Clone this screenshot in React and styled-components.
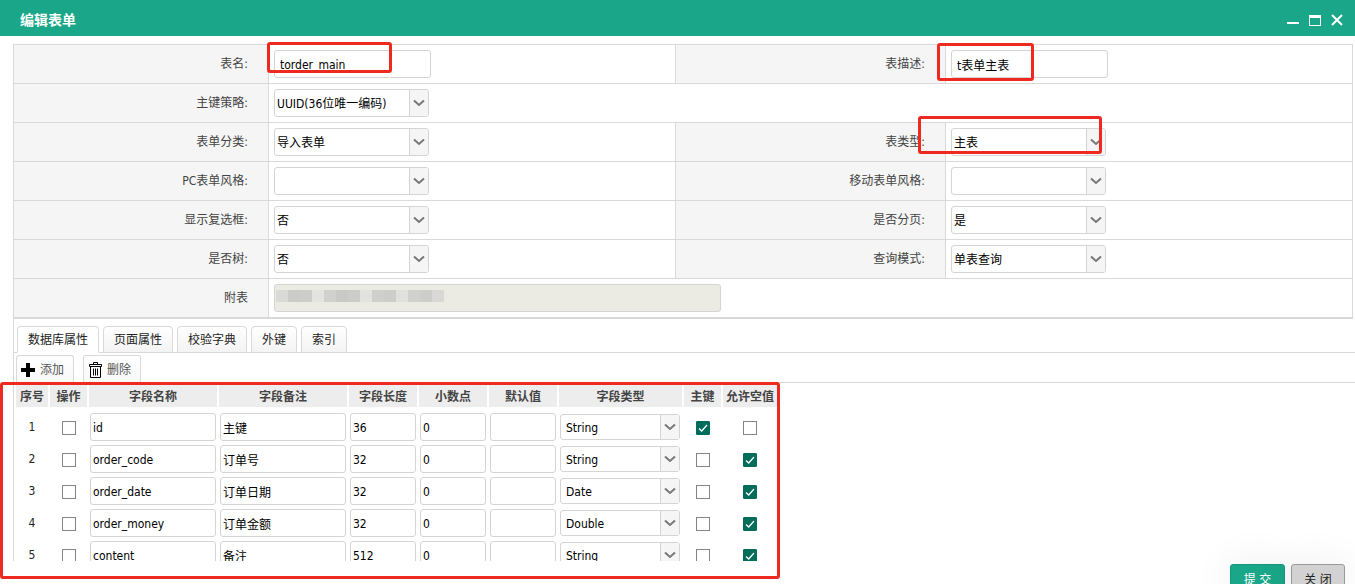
import React, { useState } from 'react';
import styled, { createGlobalStyle } from 'styled-components';

const GlobalStyle = createGlobalStyle`
    *{
        box-sizing: border-box;
    }

    body{
        margin: 0;
        background-color: #fff;
    }

    body, input, select, button{
        font-family: "DejaVu Sans Condensed", "Noto Sans CJK SC", sans-serif;
        font-size: 12px;
        line-height: 16px;
    }
`;

const formRows = [
    [
        { id: 'tableName', label: '表名:', type: 'text', value: 'torder_main', mark: 'name' },
        { id: 'tableDesc', label: '表描述:', type: 'text', value: 't表单主表', mark: 'desc' },
    ],
    [{ id: 'keyPolicy', label: '主键策略:', type: 'select', value: 'UUID(36位唯一编码)' }],
    [
        { id: 'category', label: '表单分类:', type: 'select', value: '导入表单' },
        { id: 'tableType', label: '表类型:', type: 'select', value: '主表', mark: 'type' },
    ],
    [
        { id: 'pcStyle', label: 'PC表单风格:', type: 'select', value: '' },
        { id: 'mobileStyle', label: '移动表单风格:', type: 'select', value: '' },
    ],
    [
        { id: 'showCheck', label: '显示复选框:', type: 'select', value: '否' },
        { id: 'paging', label: '是否分页:', type: 'select', value: '是' },
    ],
    [
        { id: 'isTree', label: '是否树:', type: 'select', value: '否' },
        { id: 'queryMode', label: '查询模式:', type: 'select', value: '单表查询' },
    ],
    [{ id: 'subTable', label: '附表', type: 'masked' }],
];

const tabs = ['数据库属性', '页面属性', '校验字典', '外键', '索引'];

const columns = [
    { title: '序号', width: 32 },
    { title: '操作', width: 37 },
    { title: '字段名称', width: 128 },
    { title: '字段备注', width: 128 },
    { title: '字段长度', width: 68 },
    { title: '小数点', width: 68 },
    { title: '默认值', width: 68 },
    { title: '字段类型', width: 123 },
    { title: '主键', width: 37 },
    { title: '允许空值', width: 54 },
];

const fields = [
    { name: 'id', remark: '主键', length: '36', type: 'String', primary: true, nullable: false },
    { name: 'order_code', remark: '订单号', length: '32', type: 'String', primary: false, nullable: true },
    { name: 'order_date', remark: '订单日期', length: '32', type: 'Date', primary: false, nullable: true },
    { name: 'order_money', remark: '订单金额', length: '32', type: 'Double', primary: false, nullable: true },
    { name: 'content', remark: '备注', length: '512', type: 'String', primary: false, nullable: true },
];

const maskColors = [
    '#d9dad6', '#cbccc8', '#cdcdc9', '#e3e4df', '#d0d1cd', '#c9cac6', '#cccdc9',
    '#e2e3de', '#cfd0cc', '#cdcec9', '#e0e1dc', '#d0d1cc', '#cdcec9', '#d8d9d5',
];

function SelectBox({ id, value, options, compact, label }) {
    return (
        <SelectWrap $compact={compact}>
            <select id={id} defaultValue={value} aria-label={label}>
                {(options || [value]).map(option => (
                    <option key={option} value={option}>{option}</option>
                ))}
            </select>
            <SelectArrow>
                <svg width="12" height="8" viewBox="0 0 12 8" fill="none" stroke="#777" strokeWidth="2">
                    <path d="M1 1.5 6 6l5-4.5" />
                </svg>
            </SelectArrow>
        </SelectWrap>
    );
}

function FormField({ field }) {
    if (field.type === 'text') {
        return <TextInput id={field.id} type="text" defaultValue={field.value} />;
    }
    if (field.type === 'masked') {
        return (
            <MaskedField>
                <input id={field.id} type="text" disabled />
                <Mosaic>
                    {maskColors.map((color, i) => <i key={i} style={{ backgroundColor: color }} />)}
                </Mosaic>
            </MaskedField>
        );
    }
    return <SelectBox id={field.id} value={field.value} />;
}

function App() {

    const [activeTab, setActiveTab] = useState(0);

    return (
        <Dialog>
            <GlobalStyle />

            <TitleBar>
                <h1>编辑表单</h1>
                <WindowButtons>
                    <button type="button" aria-label="最小化">
                        <svg width="14" height="14" viewBox="0 0 14 14">
                            <path d="M1 9h12v2H1z" fill="#fff" />
                        </svg>
                    </button>
                    <button type="button" aria-label="最大化">
                        <svg width="14" height="14" viewBox="0 0 14 14">
                            <path d="M1 2h12v11H1zM2 5v7h10V5z" fill="#fff" fillRule="evenodd" />
                        </svg>
                    </button>
                    <button type="button" aria-label="关闭窗口">
                        <svg width="14" height="14" viewBox="0 0 14 14" stroke="#fff" strokeWidth="2">
                            <path d="m2 2 10 10M12 2 2 12" />
                        </svg>
                    </button>
                </WindowButtons>
            </TitleBar>

            <Panel>
                <Form>
                    {formRows.map(row => (
                        <FormRow key={row[0].id} $wide={row.length === 1}>
                            {row.map(field => (
                                <React.Fragment key={field.id}>
                                    <LabelCell htmlFor={field.id}>{field.label}</LabelCell>
                                    <FieldCell>
                                        <FormField field={field} />
                                        {field.mark && <FieldMark $kind={field.mark} />}
                                    </FieldCell>
                                </React.Fragment>
                            ))}
                        </FormRow>
                    ))}
                </Form>

                <TabBar role="tablist">
                    {tabs.map((tab, i) => (
                        <Tab
                            key={tab}
                            type="button"
                            role="tab"
                            aria-selected={activeTab === i}
                            $active={activeTab === i}
                            onClick={() => setActiveTab(i)}
                        >
                            {tab}
                        </Tab>
                    ))}
                </TabBar>

                <Toolbar>
                    <ToolButton type="button">
                        <svg width="16" height="16" viewBox="0 0 16 16">
                            <path d="M6 1h4v5h5v4h-5v5H6v-5H1V6h5z" fill="#000" />
                        </svg>
                        添加
                    </ToolButton>
                    <ToolButton type="button">
                        <svg width="16" height="16" viewBox="0 0 16 16" fill="none" stroke="#000">
                            <path d="M6.500 2.500v-2h4v2M2.500 2.500h12v2h-12zM3.500 4.500v11h10v-11M6.500 6.500v7M8.500 6.500v7M10.500 6.500v7" />
                        </svg>
                        删除
                    </ToolButton>
                </Toolbar>

                <Detail>
                    <DetailScroll>
                        <DetailTable>
                            <colgroup>
                                {columns.map(col => <col key={col.title} width={col.width} />)}
                            </colgroup>
                            <thead>
                                <tr>
                                    {columns.map(col => <th key={col.title}>{col.title}</th>)}
                                </tr>
                            </thead>
                            <tbody>
                                {fields.map((field, i) => (
                                    <tr key={field.name}>
                                        <td>{i + 1}</td>
                                        <td><CheckBox type="checkbox" aria-label="操作" /></td>
                                        <td><CellInput type="text" aria-label="字段名称" defaultValue={field.name} /></td>
                                        <td><CellInput type="text" aria-label="字段备注" defaultValue={field.remark} /></td>
                                        <td><CellInput type="text" aria-label="字段长度" defaultValue={field.length} /></td>
                                        <td><CellInput type="text" aria-label="小数点" defaultValue="0" /></td>
                                        <td><CellInput type="text" aria-label="默认值" /></td>
                                        <td>
                                            <SelectBox
                                                compact
                                                label="字段类型"
                                                value={field.type}
                                                options={['String', 'Date', 'Double']}
                                            />
                                        </td>
                                        <td><CheckBox type="checkbox" aria-label="主键" defaultChecked={field.primary} /></td>
                                        <td><CheckBox type="checkbox" aria-label="允许空值" defaultChecked={field.nullable} /></td>
                                    </tr>
                                ))}
                            </tbody>
                        </DetailTable>
                    </DetailScroll>
                    <DetailMark />
                </Detail>
            </Panel>

            <Footer>
                <FooterButton type="submit" $primary>提 交</FooterButton>
                <FooterButton type="button">关 闭</FooterButton>
            </Footer>
        </Dialog>
    );
}

const Dialog = styled.div`
    display: flex;
    flex-direction: column;
    height: 100vh;
    overflow: hidden;
    color: #333;
`;

const TitleBar = styled.header`
    display: flex;
    flex: none;
    align-items: center;
    justify-content: space-between;
    height: 36px;
    padding: 4px 11px 0 20px;
    background-color: #1aa688;
    color: #fff;

    h1{
        margin: 0;
        font-size: 14px;
        line-height: 20px;
        font-weight: bold;
    }
`;

const WindowButtons = styled.div`
    display: flex;
    gap: 8px;

    button{
        display: flex;
        padding: 0;
        border: none;
        background-color: transparent;
        cursor: pointer;
    }
`;

const Panel = styled.main`
    display: flex;
    flex: 1;
    flex-direction: column;
    min-height: 0;
    margin: 8px 0 0 13px;
    border-left: 1px solid #d9d9d9;
`;

const Form = styled.form`
    flex: none;
    margin-right: 2px;
    border: solid #d9d9d9;
    border-width: 1px 1px 1px 0;
`;

const FormRow = styled.div`
    display: grid;
    grid-template-columns: ${({ $wide }) => ($wide ? '255px 1fr' : '255px 1fr 271px 1fr')};
    border-bottom: 1px solid #d9d9d9;
`;

const LabelCell = styled.label`
    display: flex;
    align-items: center;
    justify-content: flex-end;
    padding-right: 20px;
    border-right: 1px solid #d9d9d9;
    background-color: #f5f5f5;
    color: #444;
`;

const FieldCell = styled.div`
    position: relative;
    padding: 5px;

    & + label{
        border-left: 1px solid #d9d9d9;
    }
`;

const TextInput = styled.input`
    display: block;
    width: 157px;
    height: 28px;
    padding: 1px 5px 0;
    border: 1px solid #d4d4d4;
    border-radius: 3px;
    background-color: #fff;
    color: #000;
`;

const CellInput = styled(TextInput)`
    width: calc(100% - 2px);
    margin-left: 1px;
    padding: 1px 2px 0;
`;

const SelectWrap = styled.span`
    display: grid;
    grid-template-columns: 1fr 19px;
    width: ${({ $compact }) => ($compact ? '120px' : '155px')};
    height: ${({ $compact }) => ($compact ? '26px' : '28px')};
    margin-left: ${({ $compact }) => ($compact ? '1px' : '0')};
    border: 1px solid #d4d4d4;
    border-radius: 3px;
    background-color: #fff;
    overflow: hidden;

    select{
        grid-area: 1 / 1 / 2 / 3;
        width: 100%;
        padding: ${({ $compact }) => ($compact ? '1px 20px 0 5px' : '1px 20px 0 2px')};
        border: none;
        outline: none;
        appearance: none;
        background-color: transparent;
        color: #000;
    }
`;

const SelectArrow = styled.span`
    display: flex;
    grid-area: 1 / 2 / 2 / 3;
    align-items: center;
    justify-content: center;
    border-left: 1px solid #d4d4d4;
    background-color: #f5f5f5;
    pointer-events: none;
`;

const MaskedField = styled.div`
    position: relative;
    width: 447px;

    input{
        display: block;
        width: 100%;
        height: 28px;
        border: 1px solid #d4d4d4;
        border-radius: 3px;
        background-color: #ebebe4;
    }
`;

const Mosaic = styled.div`
    position: absolute;
    top: 6px;
    left: 2px;
    display: flex;

    i{
        width: 12px;
        height: 12px;
    }
`;

const TabBar = styled.div`
    display: flex;
    flex: none;
    gap: 4px;
    padding: 7px 0 0 3px;
    border-bottom: 1px solid #d9d9d9;
`;

const Tab = styled.button`
    height: 27px;
    margin-bottom: -1px;
    padding: 0 10px;
    border: 1px solid #d9d9d9;
    border-bottom-color: ${({ $active }) => ($active ? '#fff' : '#d9d9d9')};
    border-radius: 4px 4px 0 0;
    background: ${({ $active }) => ($active ? '#fff' : 'linear-gradient(#fff, #f3f3f3)')};
    color: #222;
    cursor: pointer;
`;

const Toolbar = styled.div`
    display: flex;
    flex: none;
    gap: 9px;
    padding: 2px 0 0 2px;
    border-bottom: 1px solid #d9d9d9;
`;

const ToolButton = styled.button`
    display: flex;
    align-items: center;
    gap: 4px;
    height: 27px;
    padding: 2px 9px 0 3px;
    border: 1px solid #d9d9d9;
    border-bottom: none;
    border-radius: 3px 3px 0 0;
    background: linear-gradient(#fff, #f8f8f8);
    color: #555;
    cursor: pointer;
`;

const Detail = styled.section`
    position: relative;
    flex: 1;
    min-height: 0;
`;

const DetailScroll = styled.div`
    height: 100%;
    overflow: hidden;
`;

const DetailTable = styled.table`
    width: 763px;
    table-layout: fixed;
    border-collapse: separate;
    border-spacing: 2px;
    text-align: center;

    th{
        height: 25px;
        padding: 2px 0 0;
        border-bottom: 3px solid transparent;
        background-color: #ededed;
        background-clip: padding-box;
        color: #444;
        font-weight: bold;
        white-space: nowrap;
    }

    td{
        padding: 1px 0;
        color: #222;
    }
`;

const CheckBox = styled.input`
    display: block;
    width: 14px;
    height: 14px;
    margin: 2px auto 0;
    border: 1px solid #858585;
    appearance: none;
    background-color: #fff;

    &:checked{
        border-color: #006d5b;
        border-radius: 1px;
        background: #006d5b url("data:image/svg+xml,%3Csvg xmlns='http://www.w3.org/2000/svg' viewBox='0 0 12 12'%3E%3Cpath d='M2 6.500 4.700 9 10 3' fill='none' stroke='white' stroke-width='1.300'/%3E%3C/svg%3E") center / 12px no-repeat;
    }
`;

/* red call-outs drawn over the form */
const Mark = styled.div`
    position: absolute;
    z-index: 1;
    border: 3px solid #ee2a20;
    border-radius: 3px;
    pointer-events: none;
`;

const markPlace = {
    name: 'top: -3px; left: -2px; width: 125px; height: 31px;',
    desc: 'top: -2px; left: -9px; width: 97px; height: 38px;',
    type: 'top: -7px; left: -28px; width: 184px; height: 38px;',
};

const FieldMark = styled(Mark)`
    ${({ $kind }) => markPlace[$kind]}
`;

const DetailMark = styled(Mark)`
    top: -1px;
    bottom: -18px;
    left: -14px;
    width: 780px;
`;

const Footer = styled.footer`
    display: flex;
    flex: none;
    align-items: flex-start;
    justify-content: flex-end;
    gap: 6px;
    height: 23px;
    padding: 3px 10px 0 0;
`;

const FooterButton = styled.button`
    flex: none;
    width: ${({ $primary }) => ($primary ? '55px' : '54px')};
    height: 32px;
    padding: 0;
    border: 1px solid ${({ $primary }) => ($primary ? '#16967b' : '#999')};
    border-radius: 3px;
    background-color: ${({ $primary }) => ($primary ? '#1aa688' : '#d2d2d2')};
    box-shadow: 0 0 40px rgba(0, 0, 0, 0.08);
    color: ${({ $primary }) => ($primary ? '#fff' : '#222')};
    cursor: pointer;
`;

export default App
